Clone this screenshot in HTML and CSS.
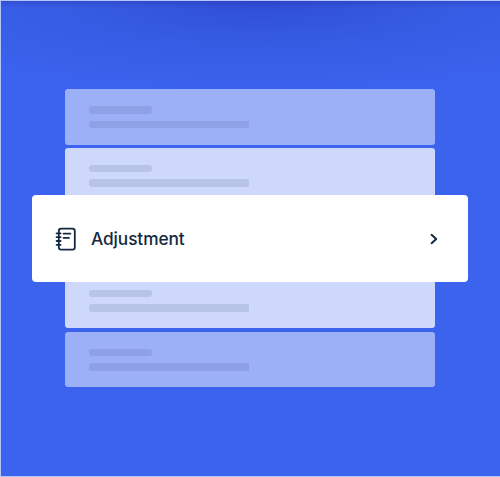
FILE: index.html
```html
<!DOCTYPE html>
<html lang="en">
<head>
<meta charset="utf-8">
<title>Adjustment</title>
<link rel="stylesheet" href="styles.css">
</head>
<body>
<main class="stage">
  <div class="card card-dim"><span class="bar"></span><span class="bar bar-long"></span></div>
  <div class="card card-top"><span class="bar"></span><span class="bar bar-long"></span></div>
  <section class="feature">
    <svg class="book" viewBox="0 0 24 26" fill="none" stroke="#142940" stroke-width="1.8" stroke-linecap="round" stroke-linejoin="round">
      <rect x="4.8" y="2.6" width="16" height="21" rx="2.4"/>
      <path d="M2.6 7.4h4M2.6 11.2h4M2.6 15h4M2.6 18.8h4M9.6 7.7h6.8M9.6 11.9h5.4"/>
    </svg>
    <span class="label">Adjustment</span>
    <svg class="chevron" viewBox="0 0 10 12" fill="none" stroke="#142940" stroke-width="2" stroke-linecap="round" stroke-linejoin="round">
      <path d="M2.6 1.8 7.2 6 2.6 10.2"/>
    </svg>
  </section>
  <div class="card card-bottom"><span class="bar"></span><span class="bar bar-long"></span></div>
  <div class="card card-dim"><span class="bar"></span><span class="bar bar-long"></span></div>
</main>
</body>
</html>
```
FILE: styles.css
```css
* { box-sizing: border-box; }

body {
  margin: 0;
  background: #b4c5f9;
  font-family: Inter, "Liberation Sans", sans-serif;
}

.stage {
  display: flex;
  flex-direction: column;
  align-items: center;
  height: 475px;
  margin: 1px 0 1px 1px;
  padding: 88px 1px 0 0;
  background:
    linear-gradient(rgba(38, 38, 150, 0.25), rgba(38, 38, 150, 0) 7px),
    radial-gradient(ellipse 420px 95px at 52% 0, rgba(36, 55, 190, 0.5), rgba(40, 75, 205, 0.32) 45%, rgba(60, 99, 238, 0)),
    #3c63ee;
}

.card {
  display: flex;
  flex-direction: column;
  gap: 7px;
  width: 369.5px;
  height: 55.5px;
  padding: 17px 24px 0;
  border-radius: 3px;
  background: #9cb0f7;
}

.card-dim .bar { background: #8ea1e7; }

.card-top {
  height: 47px;
  margin-top: 3.5px;
  padding-top: 16.5px;
  border-radius: 3px 3px 0 0;
  background: #ced8fb;
}

.card-bottom {
  height: 46px;
  margin-bottom: 3.5px;
  padding-top: 7.5px;
  border-radius: 0 0 3px 3px;
  background: #ced8fb;
}

.bar {
  flex: none;
  width: 63px;
  height: 7.5px;
  border-radius: 3px;
  background: #b8c3e8;
}

.bar-long {
  width: 160px;
  border-radius: 3px 1px 1px 3px;
}

.feature {
  display: flex;
  align-items: center;
  width: 436px;
  height: 87px;
  padding: 0 29px 0 22px;
  border-radius: 4px;
  background: #fff;
}

.book {
  width: 24px;
  height: 26px;
}

.label {
  margin-left: 13px;
  padding-top: 1px;
  font-size: 17.3px;
  font-weight: 500;
  line-height: 24px;
  letter-spacing: -0.1px;
  color: #142940;
}

.chevron {
  width: 10px;
  height: 12px;
  margin-left: auto;
}
```
